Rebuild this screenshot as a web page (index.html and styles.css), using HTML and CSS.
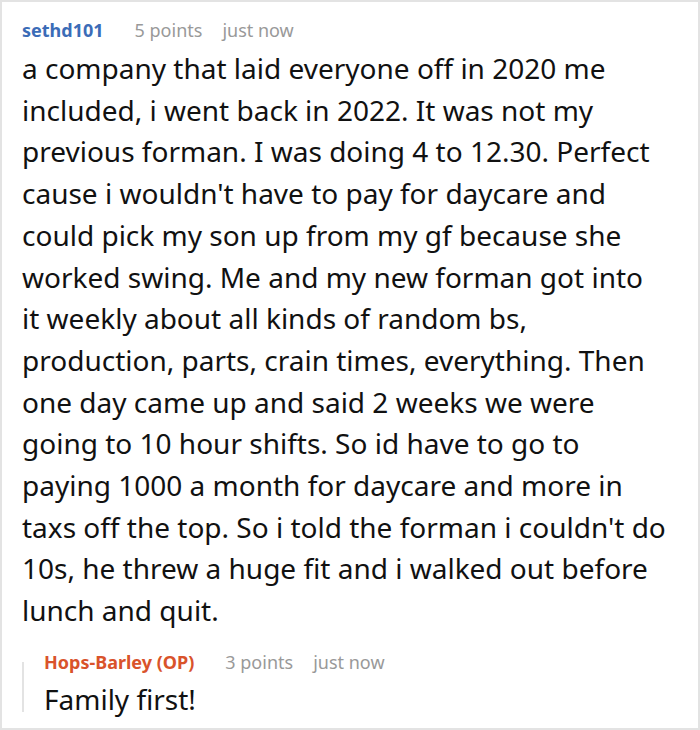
FILE: index.html
```html
<!DOCTYPE html>
<html>
<head>
<meta charset="utf-8">
<link rel="stylesheet" href="styles.css">
</head>
<body>
<div class="card">
  <div class="meta">
    <span class="user">sethd101</span>
    <span class="info">5 points</span>
    <span class="info">just now</span>
  </div>
  <p class="text">a company that laid everyone off in 2020 me included, i went back in 2022. It was not my previous forman. I was doing 4 to 12.30. Perfect cause i wouldn't have to pay for daycare and could pick my son up from my gf because she worked swing. Me and my new forman got into it weekly about all kinds of random bs, production, parts, crain times, everything. Then one day came up and said 2 weeks we were going to 10 hour shifts. So id have to go to paying 1000 a month for daycare and more in taxs off the top. So i told the forman i couldn't do 10s, he threw a huge fit and i walked out before lunch and quit.</p>
  <div class="reply">
    <div class="meta">
      <span class="user op">Hops-Barley (OP)</span>
      <span class="info">3 points</span>
      <span class="info">just now</span>
    </div>
    <p class="text reply-text">Family first!</p>
  </div>
</div>
</body>
</html>
```
FILE: styles.css
```css
html, body {
  margin: 0;
  padding: 0;
  background: #fff;
}
.card {
  box-sizing: border-box;
  width: 700px;
  height: 730px;
  border: 2px solid #e3e3e3;
  padding: 14px 31.3px 0 20px;
  font-family: "Noto Sans", "Open Sans", sans-serif;
  color: #111;
}
.meta {
  display: flex;
  align-items: baseline;
  font-size: 18px;
  line-height: 28px;
}
.user {
  font-weight: 700;
  color: #3b6cb7;
  margin-right: 31px;
}
.info {
  color: #999;
  margin-right: 20px;
}
.text {
  margin: 4px 0 0 0;
  font-size: 28px;
  line-height: 41.7px;
}
.reply {
  position: relative;
  margin-top: 16px;
  padding-left: 22px;
}
.reply::before {
  content: "";
  position: absolute;
  left: 0;
  top: 14px;
  bottom: 8px;
  width: 2px;
  background: #e3e3e3;
}
.op {
  color: #d9532b;
}
.reply-text {
  margin: 2px 0 0 0;
  line-height: 42px;
}
```
